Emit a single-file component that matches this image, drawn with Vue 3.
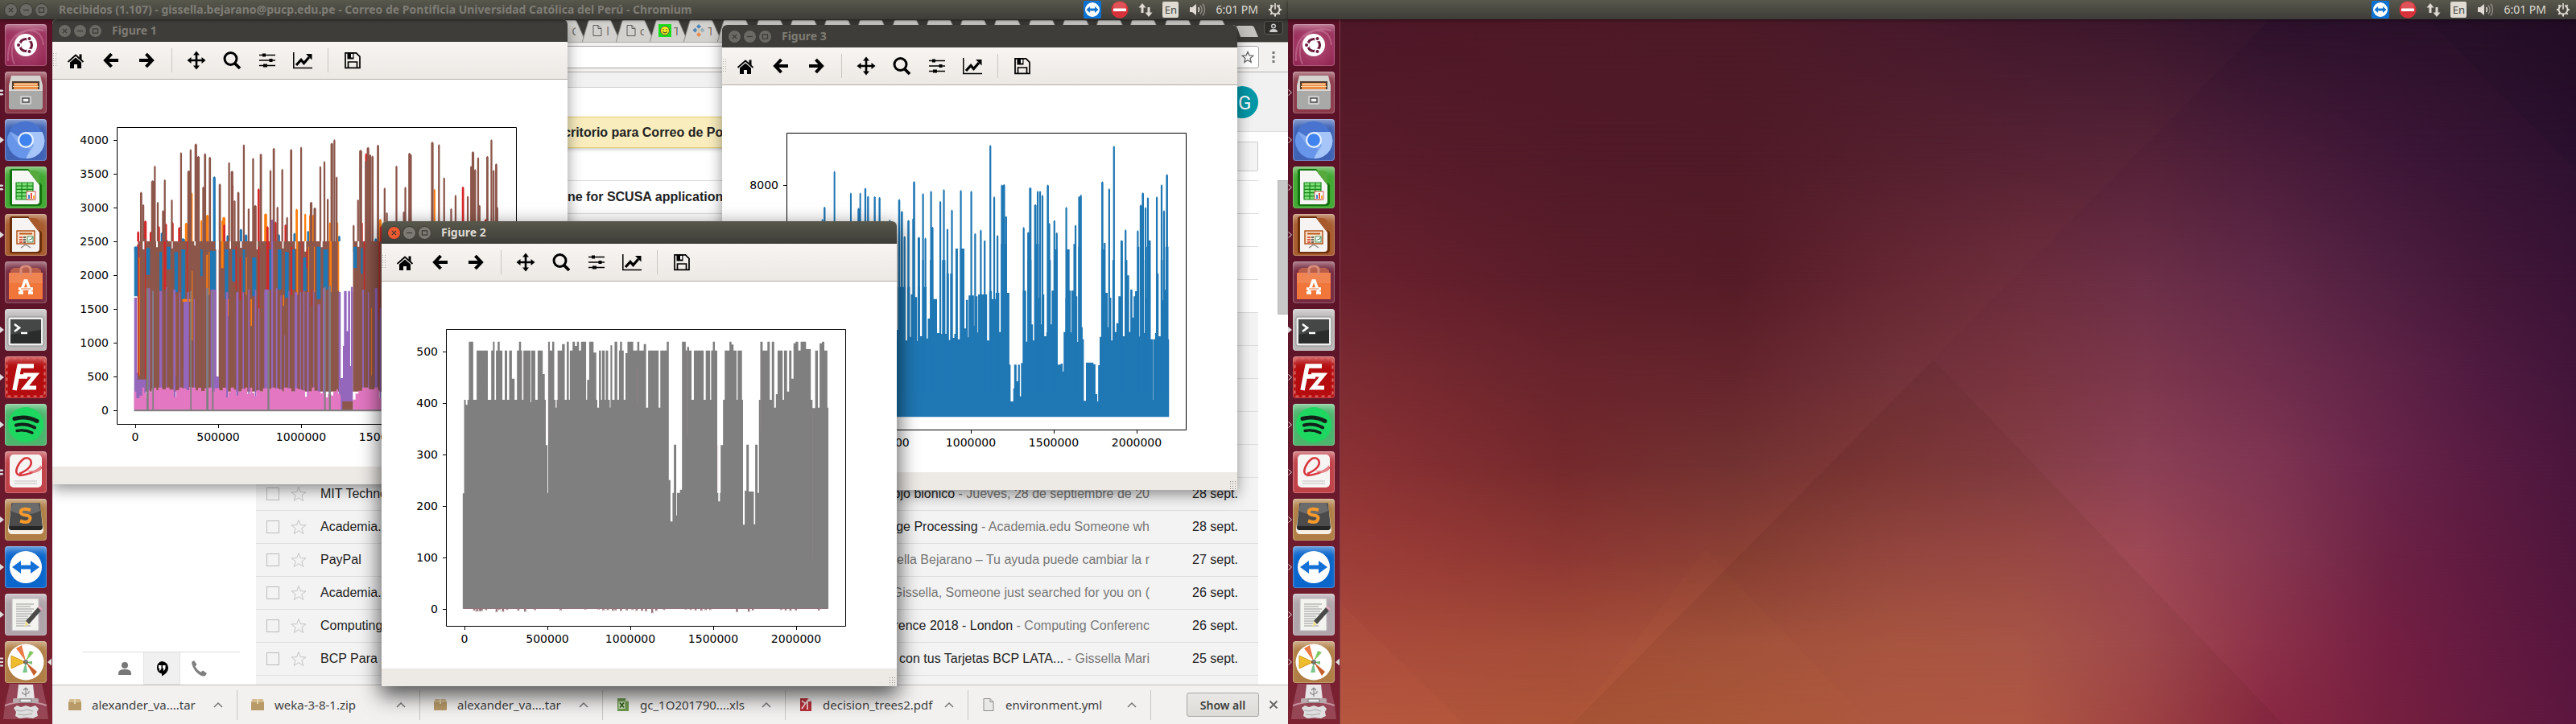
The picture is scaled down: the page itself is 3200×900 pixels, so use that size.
<script setup>
const monitors = [{ id: 'left', title: 'Recibidos (1.107) - gissella.bejarano@pucp.edu.pe - Correo de Pontificia Universidad Católica del Perú - Chromium' }, { id: 'right', title: '' }]

const launcher = [
  { name: 'dash', bg: 'plum', pip: '' },
  { name: 'files', bg: 'rose', pip: 'two' },
  { name: 'chromium', bg: 'blue', pip: 'one' },
  { name: 'calc', bg: 'green', pip: 'two' },
  { name: 'impress', bg: 'rust', pip: 'one' },
  { name: 'software', bg: 'wine', pip: '' },
  { name: 'terminal', bg: 'silver', pip: 'one' },
  { name: 'filezilla', bg: 'red', pip: 'one' },
  { name: 'spotify', bg: 'mint', pip: 'one' },
  { name: 'pdf', bg: 'coral', pip: 'two' },
  { name: 'sublime', bg: 'tan', pip: 'one' },
  { name: 'teamviewer', bg: 'azure', pip: 'one' },
  { name: 'gedit', bg: 'grey', pip: 'one' },
  { name: 'python', bg: 'tan', pip: 'three' }
]

const tabs = Array.from({ length: 34 }, (_, i) => {
  const known = { 14: ['', 'C'], 15: ['file', 'l'], 16: ['file', 'c'], 17: ['smile', 'T'], 18: ['grid', 'T'] }
  const [icon, text] = known[i] || ['', '']
  return { id: i, icon, text }
})

const mails = [
  { from: '', lead: 'ne for SCUSA application', rest: '', date: '', unread: true },
  { from: '', lead: '', rest: '', date: '', unread: true },
  { from: '', lead: '', rest: '', date: '', unread: true },
  { from: '', lead: '', rest: '', date: '', unread: true },
  { from: '', lead: '', rest: '', date: '' },
  { from: '', lead: '', rest: '', date: '' },
  { from: '', lead: '', rest: '', date: '' },
  { from: '', lead: '', rest: '', date: '' },
  { from: '', lead: '', rest: '', date: '' },
  { from: '', lead: '', rest: '', date: '' },
  { from: 'MIT Technology', lead: 'ojo biónico', rest: ' - Jueves, 28 de septiembre de 20', date: '28 sept.' },
  { from: 'Academia.edu', lead: 'Image Processing', rest: ' - Academia.edu Someone wh', date: '28 sept.' },
  { from: 'PayPal', lead: '', rest: 'Gissella Bejarano – Tu ayuda puede cambiar la r', date: '27 sept.' },
  { from: 'Academia.edu', lead: '', rest: 'Gissella, Someone just searched for you on (', date: '26 sept.' },
  { from: 'Computing', lead: 'Conference 2018 - London', rest: ' - Computing Conferenc', date: '26 sept.' },
  { from: 'BCP Para', lead: 'con tus Tarjetas BCP LATA...', rest: ' - Gissella Mari', date: '25 sept.' },
  { from: '', lead: '', rest: '', date: '' }
].slice(0).filter((m, i) => i !== 9).map((m, i) => ({ ...m, id: i }))

const downloads = [
  { name: 'alexander_va....tar', kind: 'box' },
  { name: 'weka-3-8-1.zip', kind: 'box' },
  { name: 'alexander_va....tar', kind: 'box' },
  { name: 'gc_1O201790....xls', kind: 'xls' },
  { name: 'decision_trees2.pdf', kind: 'pdf' },
  { name: 'environment.yml', kind: 'page' }
].map((d, i) => ({ ...d, id: i }))

const tools = ['home', 'back', 'forward', 'sep', 'pan', 'zoom', 'sliders', 'chart', 'sep', 'save']

const xt = [[103, '0'], [206, '500000'], [309, '1000000'], [412, '1500000'], [515, '2000000']]
const figures = [
  { n: 1, xt, yt: [0, 500, 1000, 1500, 2000, 2500, 3000, 3500, 4000].map(v => [411 - v * 42 / 500, v]) },
  { n: 3, xt, yt: [0, 2000, 4000, 6000, 8000].map(v => [412 - v * 36 / 1000, v]) },
  { n: 2, xt, yt: [0, 100, 200, 300, 400, 500].map(v => [407 - v * 64 / 100, v]) }
]

/* Outline of a filled step trace: flat run tuples "x,top" down to a floor. */
function steps(text, floor) {
  const pts = text.trim().split(/\s+/).map(p => p.split(',').map(Number))
  let d = `M${pts[0][0]} ${floor}`
  for (const [x, y] of pts) d += `H${x}V${y}`
  return d + `V${floor}Z`
}
/* Vertical spikes "x,top[,width]" down to a floor. */
function spikes(text, floor, width) {
  return text.trim().split(/\s+/).map(p => {
    const [x, y, w = width] = p.split(',').map(Number)
    return `M${x - w / 2} ${floor}V${y + 3}L${x} ${y - 2}L${x + w / 2} ${y + 3}V${floor}Z`
  }).join('')
}
/* Bars "x,width,top,bottom". */
function bars(text, floor) {
  return text.trim().split(/\s+/).map(p => {
    const [x, w, t, b = floor] = p.split(',').map(Number)
    return `M${x} ${t}h${w}V${b}h${-w}Z`
  }).join('')
}

const greyTrace = steps(`249,1060 253,711 258,730 263,711 267,494 280,711 290,527 323,711 333,527 338,494 343,711 347,527 352,494 358,527 366,711 373,527 380,711 386,527 394,632 402,711 409,527 415,494 421,527 424,711 428,527 449,720 451,527 463,711 470,527 485,615 491,711 494,880 499,1058 501,494 506,527 513,494 519,711 523,740 526,711 529,527 542,503 550,711 556,494 562,711 565,527 573,494 580,510 586,494 592,527 598,494 613,711 616,637 622,494 635,535 643,711 646,740 651,527 657,711 660,527 668,711 671,527 678,711 683,740 685,508 690,711 697,494 705,711 710,527 713,494 719,527 724,711 729,537 735,494 752,527 764,494 770,527 783,503 790,740 796,527 827,740 832,527 851,494 857,1010 862,1165 868,1058 872,878 879,1142 881,1058 890,1046 896,494 907,527 911,514 917,527 924,711 931,527 960,711 966,527 979,711 982,527 987,494 993,527 1000,1058 1003,1090 1008,1058 1010,880 1017,711 1022,527 1036,494 1042,505 1048,527 1057,711 1060,527 1073,711 1076,1177 1081,1050 1086,878 1093,1053 1108,1175 1112,878 1119,1058 1123,711 1127,494 1134,527 1148,494 1155,711 1161,494 1168,740 1173,690 1178,527 1193,711 1197,527 1206,680 1212,527 1219,632 1225,500 1231,494 1239,527 1246,494 1262,522 1276,711 1281,742 1289,527 1297,740 1302,500 1309,494 1316,527 1325,740 1328,740`, 1490)
const greyNoise = spikes('283,1497 291,1500 299,1499 305,1498 318,1495 349,1502 357,1494 368,1501 380,1494 413,1497 433,1501,6 462,1495 538,1496 611,1493 650,1493 664,1496 677,1495 692,1497 700,1496 716,1498 733,1496 750,1494 762,1497 778,1498 790,1499 808,1506,6 820,1498 843,1494 907,1493 922,1494 936,1496 953,1497 966,1495 979,1494 1058,1502 1093,1501 1105,1496 1189,1494 1202,1496 1216,1497 1232,1496 1300,1496', 1488, 6)

const blueSteps = steps(`-290,400 38,360 42,200 67,400 73,200 82,386 85,228 97,238 106,402 108,200 116,384 123,100 129,200 138,392 142,318 149,100 160,245 173,372 182,375 190,100 201,375 205,150 213,398 217,150 225,390 231,375 235,57 243,395 250,57 265,355 270,248 277,388 279,232 297,345 300,235 309,370 311,228 341,400 348,215 357,245 370,222 382,368 387,40 408,222 416,490 420,627 429,578 432,490 440,552 445,490 451,608 455,484 461,214 472,404 477,100 490,340 495,400 500,40 515,240 522,340 525,228 533,384 540,370 544,100 555,340 558,214 565,60 578,490 588,486 595,515 598,368 604,240 606,60 618,214 622,370 624,214 631,40 638,235 644,405 647,50 657,350 662,395 666,625 673,482 698,488 705,600 711,627 714,492 719,386 724,60 733,36 739,222 746,350 753,240 758,400 762,100 768,368 775,335 782,235 790,28 797,384 803,100 812,157 818,368 822,210 829,314 833,235 838,216 845,50 852,385 854,100 868,372 871,50 878,240 882,28 890,395 899,622 900,395 905,372 909,150 917,384 924,100 931,250 934,210 940,50 950,395 952,395`, 685)
const blueSpikes = spikes('46,-126,7 55,-82,7 64,12 77,-48,7 93,-55 96,-193,7 112,15,8 126,-148 134,18 153,-157 158,-23 184,-119 196,-163 208,-16 223,-87 253,-160 288,-157 301,1 320,-12 333,27 352,-328 365,-136 376,8 391,-180,7 398,-182,7 405,-63 464,-22 479,-4 486,-170,8 503,-107,8 511,-157 519,-157 527,-142 545,-180,7 550,-37 567,-48 575,-2 607,-97 638,-30 650,-137 656,-143 728,-192,7 751,-166 767,-325 792,27 806,-13 847,-10 857,-105,7 864,-151,7 873,-96 881,-133 887,27 911,-136 927,-181 935,-84 945,-219,7', 600, 6)
const blueSpikesLeft = spikes('995,818 1003,772,7 1040,639 1101,720 1130,777,8 1136,720 1155,702,7 1165,732,7 1190,733,7 1208,736,7 1246,820', 1500, 6)

const brownTop = spikes('382,717,6 388,763 413,674,8 419,619 427,754 446,670 441,785 465,745 490,569 511,637,8 516,557 530,537,7 537,583,7 550,697 555,573,6 568,586,6 595,686,6 620,606 628,638,7 635,748 645,716,6 660,540 673,778 685,590 691,766,7 706,574,6 732,635 741,553,6 751,772 764,631 777,810 788,557,6 815,549 842,754,7 852,775,7 867,621 878,602 887,742 898,534,7 905,521 911,660 957,840 969,745 976,560,8 990,600 996,550,7 1002,577 1008,582,6 1023,541,6 1041,701 1047,793 1073,619 1097,698 1093,790 1108,571,6 1112,576 1170,530,7 1188,539 1202,663 1221,778 1233,728 1266,732 1275,620 1280,566,7 1286,632 1294,588 1298,766 1319,583,6 1330,521 1336,635 1343,611,6 1346,773', 940, 5)
const redTop = spikes('374,864,6 393,824,8 408,865 430,845 449,835 467,830 486,848,8 607,838 629,690 700,704 724,845 746,828 773,838 979,830 991,573 1031,845 1253,697 1314,818', 940, 6)
const orangeTop = spikes('504,832,7 519,720 545,822 561,802,7 602,822 606,810,8 719,797,8 803,780,6 826,798 840,802,7 848,802,8 893,830 913,830 1029,818,7 1176,706', 940, 5)
const blueTop = spikes('368,920,9 400,920 452,897,8 438,868 460,912,8 475,912 495,890,12 532,912 574,912 580,659,7 616,878 652,855,7 666,875,7 680,906,9 712,912,9 755,875 797,870,6 834,862,6 918,880 962,910,9 1017,890,7', 940, 6)

const brownBase = bars('512,756,30 512,290,0 536,8,-10 816,446,0 1315,110,0', 560)
const whiteGaps = bars('510,4,0,12 532,6,0,30 582,6,0,22 640,4,0,26 724,5,0,16 806,9,0,505 856,5,0,28 895,6,0,24 956,4,0,30 1052,5,0,26 1100,4,0,28 1135,6,0,38 1196,6,0,22 1264,51,0,190 1271,7,190,510 1278,4,190,390 1292,5,190,335 1305,3,190,465 1333,6,0,20', 0)
const bluePatches = bars('500,13,20,205 545,14,25,125 594,9,40,185 622,13,20,105 650,13,40,190 676,14,30,215 747,8,30,130 783,22,35,180 838,13,30,215 865,12,30,150 905,8,30,190 940,15,60,205 1003,9,30,180 1035,14,30,180 1062,14,40,210 1090,9,30,180 1130,12,60,185 1180,15,20,215 1205,17,30,180 1317,13,20,100 1345,7,25,120', 0)
const orangeStripes = bars('518,3,60,500 652,3,200,500 680,38,215,225 715,3,110,370 769,5,50,200 778,3,40,200 824,9,0,100 848,4,215,280 917,3,60,200 934,5,215,315 1055,4,200,240 1105,6,0,200 1102,4,200,500 1149,3,20,190 1170,3,20,190 1228,8,0,190 1259,6,0,185 1384,2,250,500', 0)
const redStripes = bars('513,4,0,500 540,3,0,510 610,9,0,180 696,4,0,190 878,4,20,180 893,5,60,220 963,4,20,280 993,10,0,180 1083,6,20,200 1124,3,0,190 1142,4,30,100 1160,3,180,240 1356,4,0,180 1411,4,0,290', 0)
const purpleStripes = bars('500,10,210 500,44,515 510,3,490 547,12,175 567,6,185 594,10,185 619,3,170 646,8,180 668,4,190 684,14,225 698,6,190 722,4,215 769,8,175 785,21,180 806,10,505 842,8,190 880,9,190 904,5,190 925,5,180 950,5,180 963,4,250 985,18,180 1011,7,0 1028,6,175 1045,4,200 1060,3,350 1075,4,185 1098,10,190 1118,4,190 1130,5,185 1144,7,190 1168,3,185 1184,9,235 1203,10,175 1225,5,170 1262,8,190 1270,8,510 1278,4,390 1282,10,185 1292,5,335 1297,8,185 1305,3,465 1308,7,170 1350,6,180 1371,4,190 1397,10,175 1415,5,250', 631)
const pinkTrace = steps('500,560 508,585 520,575 530,545 538,565 545,585 550,555 558,562 565,550 575,545 583,555 590,545 605,552 618,545 632,553 647,580 656,555 668,545 680,548 695,555 705,543 716,545 730,556 738,546 750,558 762,548 775,545 790,560 800,548 818,556 830,546 843,582 850,562 860,545 872,553 880,575 888,560 900,550 915,545 922,570 932,545 940,565 948,578 955,556 970,560 980,548 1002,550 1012,545 1025,548 1040,552 1052,560 1058,545 1072,548 1086,560 1100,548 1112,552 1124,556 1137,580 1146,560 1162,545 1172,557 1185,560 1195,566 1206,560 1214,582 1222,570 1235,575 1242,560 1254,552 1260,570 1268,575 1270,631 1315,590 1325,568 1336,557 1350,545 1375,552 1395,545 1410,556 1414,585 1420,585', 631)
const greyLines = bars('546,8,175 568,5,185 709,5,185 769,8,175 790,6,185 997,7,185 1208,6,170 1226,7,165 500,920,628', 634)

/* Wallpaper colour mesh: one horizontal gradient per row, cross-faded downwards. */
const meshX = [0, 18, 32, 45, 55, 65, 75, 85, 92, 100]
const meshY = [0, 20, 37, 50, 63, 76, 89, 100]
const mesh = [
  '4b1526 4c1726 4a1826 44172a 3e162a 38152b 2c112b 2a102a 281028 230d24',
  '571a29 4f1827 4d1826 521e2d 542033 552238 4b1d3a 3e1737 361433 2e1130',
  '681f2d 571b28 521a26 632532 6c2c3c 6c2f47 612948 4f1f40 441838 3a1336',
  '7a2930 66222b 61222b 70303a 78343f 7c374c 702e4c 5e2346 501b40 42153a',
  '8a3034 72272b 703030 7f3838 843d43 8b4055 7f3552 68244a 5a1c42 4b163c',
  '9b3c38 8b3632 8a4034 9a4a42 9f4c48 9e4855 873750 6c2244 601b40 50163c',
  'aa4a3c a44c38 a8543e b05a44 b05a4b a44c50 8c3149 741f42 651b40 58163e',
  'b2543e ac5438 b05a3c b65c44 b85c48 a54648 8a2843 75203f 681b3f 5c173f'
].map((row, i) => {
  const stops = row.split(' ').map((c, k) => `#${c} ${meshX[k]}%`).join(', ')
  const mask = i ? `linear-gradient(to bottom, transparent ${meshY[i - 1]}%, #000 ${meshY[i]}%)` : 'none'
  return { background: `linear-gradient(to right, ${stops})`, maskImage: mask }
})
</script>

<template>
  <main class="desk">
    <section v-for="m in monitors" :key="m.id" class="monitor">
      <header class="panel">
        <div v-if="m.title" class="wbtns">
          <button v-for="b in ['x', 'm', 'r']" :key="b" class="wbtn" :aria-label="b">
            <svg viewBox="0 0 17 17"><path v-if="b === 'x'" d="M5.500 5.500l6 6M11.500 5.500l-6 6" /><path v-else-if="b === 'm'" d="M4.500 8.500h8" /><rect v-else x="5" y="5.500" width="7" height="6" /></svg>
          </button>
        </div>
        <h1 class="ptitle">{{ m.title }}</h1>
        <div class="tray">
          <svg class="ic22" viewBox="0 0 22 22"><rect width="22" height="22" rx="2" fill="#0c72d4" /><circle cx="11" cy="11" r="9" fill="#fff" /><path d="M3.500 11l4.500-4v2.500h6v-2.500l4.500 4-4.500 4v-2.500h-6v2.500z" fill="#1272cf" /></svg>
          <svg class="ic22" viewBox="0 0 22 22"><circle cx="11" cy="11" r="10.500" fill="#d8333a" /><ellipse cx="11" cy="6.500" rx="8" ry="5.500" fill="#e4686a" opacity=".6" /><rect x="3" y="9.500" width="16" height="3.500" fill="#fff" /></svg>
          <svg class="ic18" viewBox="0 0 18 18"><path d="M5 1L0.500 6.500h3V13h3V6.500h3zM13 18l4.500-5.500h-3V6h-3v6.500h-3z" fill="#dfdbd2" /></svg>
          <span class="lang">En</span>
          <svg class="ic22" viewBox="0 0 22 22"><path d="M2 8h3l5-4v14l-5-4H2z" fill="#dfdbd2" /><path d="M12.500 8q2 3 0 6" fill="none" stroke="#dfdbd2" stroke-width="1.500" /><path d="M15 5.500q4 5.500 0 11M18 3.500q5 7.500 0 15" fill="none" stroke="#8d8a82" stroke-width="1.500" /></svg>
          <time class="clock">6:01 PM</time>
          <svg class="ic18" viewBox="0 0 18 18"><circle cx="9" cy="9" r="5.500" fill="none" stroke="#dfdbd2" stroke-width="2" /><path d="M9 1v3M9 15v2.500M1 9h3M14 9h3M3.300 3.300l2 2M12.700 12.700l2 2M3.300 14.700l2-2M12.700 5.300l2-2" stroke="#dfdbd2" stroke-width="2" /><path d="M9 1v8" stroke="#47463f" stroke-width="4" /><path d="M9 1v7.500" stroke="#dfdbd2" stroke-width="1.700" /></svg>
        </div>
      </header>

      <div class="work">
        <nav class="launcher" :class="m.id">
          <button v-for="a in launcher" :key="a.name" class="tile" :class="a.bg" :aria-label="a.name">
            <svg class="pip" viewBox="0 0 6 12">
              <template v-if="m.id === 'left'">
                <path v-if="a.pip === 'one'" d="M0 2l5 4-5 4z" fill="#ddd" />
                <path v-if="a.pip === 'two'" d="M0 2.500h3l1.500 1.200-1.500 1.200h-3zM0 7h3l1.500 1.200-1.500 1.200h-3z" fill="#ddd" />
                <path v-if="a.pip === 'three'" d="M0 0.500h4v2h-4zM0 5h4v2h-4zM0 9.500h4v2h-4z" fill="#ddd" />
              </template>
              <path v-else-if="a.name === 'terminal'" d="M0 2l5 4-5 4z" fill="#ddd" />
              <path v-else-if="a.pip" d="M0.500 2.500l4 3.500-4 3.500" fill="none" stroke="#ddd" />
            </svg>
            <svg v-if="a.name === 'python'" class="pipr" viewBox="0 0 6 12"><path d="M6 1.500L1 6l5 4.500z" fill="#ddd" /></svg>
            <svg class="app" viewBox="0 0 52 52">
              <g v-if="a.name === 'dash'">
                <path d="M4 46Q2 14 26 8Q46 6 48 26M12 50Q2 26 22 10M48 8Q30 2 14 16" fill="none" stroke="#d890ac" stroke-width="2" opacity=".45" />
                <circle cx="26" cy="26" r="14" fill="#fff" /><circle cx="26" cy="26" r="7.500" fill="none" stroke="#6d1b3c" stroke-width="3.200" />
                <g stroke="#fff" stroke-width="1.500"><circle cx="17" cy="26" r="2.800" fill="#6d1b3c" /><circle cx="30.500" cy="18" r="2.800" fill="#6d1b3c" /><circle cx="30.500" cy="34" r="2.800" fill="#6d1b3c" /></g>
              </g>
              <g v-else-if="a.name === 'files'">
                <path d="M8 5h36l3 12v26a4 4 0 0 1-4 4H9a4 4 0 0 1-4-4V17z" fill="#d4d3d0" /><rect x="9" y="12" width="34" height="12" fill="#4f3c32" /><path d="M11 14h30v9H11z" fill="#e98a45" /><path d="M10 18h32v1H10zM12 15h28v1.500H12z" fill="#f8d7a8" />
                <path d="M5 22h42v21a4 4 0 0 1-4 4H9a4 4 0 0 1-4-4z" fill="#a9a9a8" /><path d="M5 22h42v2H5z" fill="#d7d6d4" /><rect x="19" y="30" width="14" height="11" rx="2" fill="#cfcfcf" /><rect x="22" y="33" width="8" height="5" fill="#f4f4f4" stroke="#4d4d4d" stroke-width="1.500" />
              </g>
              <g v-else-if="a.name === 'chromium'">
                <circle cx="26" cy="27" r="22" fill="#7fa8ee" /><path d="M26 27L6 15A22 22 0 0 1 46 16z" fill="#4874cf" /><path d="M26 16h20.500A22 22 0 0 1 26 49l10-16z" fill="#a6c6fa" /><path d="M6 16A22 22 0 0 0 26 49l5-12-13-4z" fill="#6695ea" /><circle cx="26" cy="26" r="10" fill="#eaf2fe" /><circle cx="26" cy="26" r="7.800" fill="#3f83ee" />
              </g>
              <g v-else-if="a.name === 'calc'">
                <path d="M6 6q0-3 3-3h20l17 20v21q0 5-5 5H9q-3 0-3-3z" fill="#14710f" /><path d="M9 5h20l14 18v20q0 4-4 4H9z" fill="#f6f6f4" /><path d="M29 5l14 18V12q0-7-7-7z" fill="#57a93c" />
                <path d="M14 20h21v21H14z" fill="#7fe07a" /><path d="M14 20h21v21H14zM14 24.200h21M14 28.400h21M14 32.600h21M14 36.800h21M21 20v21M28 20v21" fill="none" stroke="#17851a" stroke-width="1.200" /><rect x="27" y="31" width="11" height="10" fill="#fff" stroke="#c55" /><path d="M29 40v-5h2v5z" fill="#3a86c8" /><path d="M32 40v-7h2v7z" fill="#e3533a" /><path d="M35 40v-4h2v4z" fill="#f3b63c" />
              </g>
              <g v-else-if="a.name === 'impress'">
                <path d="M6 6q0-3 3-3h20l17 20v21q0 5-5 5H9q-3 0-3-3z" fill="#6a2e0b" /><path d="M9 5h20l14 18v20q0 4-4 4H9z" fill="#f6f4f2" /><path d="M29 5l14 18V12q0-7-7-7z" fill="#a95a2c" />
                <rect x="15" y="21" width="22" height="16" fill="#fbe3cb" stroke="#b4561f" stroke-width="1.500" /><path d="M18 24.500h16" stroke="#b4561f" stroke-width="2" /><path d="M18 29h4M18 32h4M18 35h4" stroke="#d2362a" stroke-width="1.300" /><path d="M23 29h3M23 32h3M23 35h3" stroke="#333" stroke-width="1.500" /><rect x="28" y="28" width="7" height="7" fill="#fff" stroke="#3c8f5e" /><path d="M29.500 33l2-2 1 1 2-3" fill="none" stroke="#2b7a4a" /><path d="M26 38l-6 4M26 38l6 4" stroke="#888" stroke-width="1.500" />
              </g>
              <g v-else-if="a.name === 'software'">
                <path d="M7 11l4-3h30l4 3v4H7z" fill="#c9694d" opacity=".8" /><path d="M5 14h42v33H5z" fill="#f0763a" /><path d="M5 14h42v13H5z" fill="#f18551" /><path d="M20 17v-7q0-4 6-4t6 4v7" fill="none" stroke="#d98b77" stroke-width="3" /><path d="M20 38l5-14h2l5 14" fill="none" stroke="#fff" stroke-width="3.500" /><path d="M17 34h18M17 39h6M29 39h6" stroke="#fff" stroke-width="3.500" /><path d="M20 34h12" stroke="#f0763a" stroke-width="1" />
              </g>
              <g v-else-if="a.name === 'terminal'">
                <rect x="4" y="10" width="44" height="36" rx="2" fill="#eee" stroke="#8d8d8d" /><rect x="7" y="13" width="38" height="30" fill="#2b2d2c" /><path d="M7 13h38v13L7 32z" fill="#454746" /><path d="M12 19l6 4.500-6 4.500" fill="none" stroke="#fff" stroke-width="2.600" /><path d="M20 30h8" stroke="#fff" stroke-width="2.400" />
              </g>
              <g v-else-if="a.name === 'filezilla'">
                <rect x="2.500" y="2.500" width="47" height="47" fill="none" stroke="#dc6a66" stroke-width="2" stroke-dasharray="4 4" /><path d="M12 42L18 12h18M15 25h13" fill="none" stroke="#fff" stroke-width="5.500" /><path d="M23 23h15L25 39h14" fill="none" stroke="#fff" stroke-width="5" />
              </g>
              <g v-else-if="a.name === 'spotify'">
                <circle cx="26" cy="26" r="22" fill="#1ed760" /><g fill="none" stroke="#12201a" stroke-linecap="round"><path d="M12 18.500q15-4 28 3" stroke-width="5" /><path d="M14 26.500q12-3 23 3" stroke-width="4.200" /><path d="M15 33.500q10-2 19 2.500" stroke-width="3.400" /></g>
              </g>
              <g v-else-if="a.name === 'pdf'">
                <rect x="6" y="4" width="40" height="41" rx="5" fill="#f7f5f4" /><path d="M18 28Q36 20 32 11Q26 4 18 15Q10 28 19 30Q32 29 46 20" fill="none" stroke="#d8383e" stroke-width="2.600" /><path d="M28 24Q38 26 45 17v6Q36 30 28 24z" fill="#e58488" /><path d="M12 37h28M12 40h28" stroke="#c3c0be" />
              </g>
              <g v-else-if="a.name === 'sublime'">
                <path d="M8 8L4 38q0 6 5 6h34q5 0 5-6L44 8z" fill="#f5efe4" /><path d="M10 5h32q2 0 2 2l3 28q0 4-4 4H9q-4 0-4-4L8 7q0-2 2-2z" fill="#4b4b4b" /><path d="M10 5h32l2 10Q26 24 7 15z" fill="#6b6b6b" /><path d="M5.500 34h41v2q0 3-4 3H9q-4 0-4-3z" fill="#252525" /><path d="M32 14q-11-3-12 1.500t6 5 5 5.500-12 1.500" fill="none" stroke="#f79a2b" stroke-width="4" />
              </g>
              <g v-else-if="a.name === 'teamviewer'">
                <circle cx="26" cy="26" r="20" fill="#fff" /><path d="M9 26l11-8v5.500h12V18l11 8-11 8v-5.500H20V34z" fill="#1470d6" />
              </g>
              <g v-else-if="a.name === 'gedit'">
                <rect x="9" y="6" width="33" height="40" fill="#f3f3f0" stroke="#bbb" /><path d="M14 13h22M14 16h18M14 19h22M14 22h20M14 25h22M14 28h15M14 31h20M14 34h16M14 37h12M14 40h18" stroke="#9a9a98" /><path d="M26 34L41 17l4 4-15 17z" fill="#4a4b48" /><path d="M41 17l2-2 4 4-2 2z" fill="#dba4b8" /><path d="M26 34l4 4-6 3z" fill="#f3e39a" />
              </g>
              <g v-else>
                <circle cx="26" cy="26" r="22.500" fill="#fff" /><path d="M26 25L14 9l7-4z" fill="#eb7a45" /><path d="M26 25l5-13 5 2z" fill="#83c763" /><path d="M25 26L8 18v16z" fill="#eebb2c" stroke="#d19a1c" /><path d="M26 26l8-1 0 4z" fill="#77bb77" /><path d="M26 26l14 12-4 5z" fill="#c95f2c" /><path d="M26 26l2 13h-6z" fill="#7cc58f" /><circle cx="26" cy="26" r="3" fill="#333" opacity=".6" />
              </g>
            </svg>
          </button>
          <button class="trash" aria-label="trash">
            <svg viewBox="0 0 56 46"><path d="M8 0h40l6 27q-26-7-52 0zM2 27q26-7 52 0l2 17H0z" fill="#c88a9a" opacity=".35" /><path d="M2 27q26-9 52 0" fill="none" stroke="#e4c5cd" stroke-width="2" opacity=".6" /><path d="M19 1h18l2 18H17z" fill="#e8e6e6" /><path d="M28 5v11M25 8l3-3 3 3M24 10v2l4 2M32 9v2l-4 2" fill="none" stroke="#8a8888" stroke-width="1.200" /><rect x="12" y="18" width="32" height="6" rx="2" fill="#b9a9ad" /><path d="M21 19h14v4H21z" fill="#eee" stroke="#777" /><path d="M13 30l4-3 5 2 6-2 6 2 6-2 4 4-2 4 1 5-6 3-8-1-9 1-5-3 1-5z" fill="#dedede" /><path d="M16 33l7 1 6-2 8 2M18 38l8 1 10-2" fill="none" stroke="#a9a5a6" /></svg>
          </button>
        </nav>

        <div v-if="m.id === 'left'" class="session">
          <article class="browser">
            <div class="tabstrip">
              <button v-for="t in tabs" :key="t.id" class="tab">
                <svg class="tabbg" viewBox="0 0 48 28"><path d="M0 28L8 1q.5-1 2-1h24q1.500 0 2 1l12 27z" fill="#d3d1ce" stroke="#8c8a87" /></svg>
                <svg class="tabic" viewBox="0 0 16 16">
                  <path v-if="t.icon === 'file'" d="M3 1.500h6l4 4v9H3zM9 1.500v4h4" fill="none" stroke="#5a5a5a" />
                  <g v-else-if="t.icon === 'smile'"><rect width="16" height="16" fill="#18e01a" /><circle cx="8" cy="8" r="5.500" fill="#f8ee20" stroke="#554" /><path d="M6 6v1.500M10 6v1.500M5 9.500q3 3 6 0" stroke="#222" fill="none" /></g>
                  <g v-else-if="t.icon === 'grid'"><path d="M8 0l3 3-3 3-3-3zM3.500 4.500l3 3-3 3-3-3z" fill="#4a86b8" /><path d="M12.500 4.500l3 3-3 3-3-3z" fill="#9ab0b8" /><path d="M8 5l3 3-3 3-3-3z" fill="#d5c8b0" /><path d="M8 10l3 3-3 3-3-3z" fill="#e88a4a" /></g>
                </svg>
                <span class="tabtx">{{ t.text }}</span>
              </button>
              <div class="stripend">
                <svg class="newtab" viewBox="0 0 28 15"><path d="M0 0h19q2 0 3 2l5 12H5z" fill="#c4c2bf" /></svg>
                <button class="user" aria-label="profile"><svg viewBox="0 0 12 12"><circle cx="6" cy="3.500" r="2.300" fill="none" stroke="#ccc" stroke-width="1.400" /><path d="M1 11q0-4 5-4t5 4z" fill="#ccc" /></svg></button>
              </div>
            </div>
            <div class="addr">
              <input class="url" type="text" aria-label="address">
              <svg class="fav" viewBox="0 0 16 16"><path d="M8 1.500l2 4.500 4.700.4-3.600 3.200 1.100 4.700L8 11.800l-4.200 2.500 1.100-4.700L1.300 6.400 6 6z" fill="none" stroke="#666" stroke-width="1.300" /></svg>
              <svg class="dots" viewBox="0 0 4 16"><path d="M.5 1h3v3h-3zM.5 6.500h3v3h-3zM.5 12h3v3h-3z" fill="#777" /></svg>
            </div>
            <div class="ghead">
              <div class="gtop"></div>
              <span class="avatar">G</span>
            </div>
            <p class="notice">critorio para Correo de Pontificia</p>
            <div class="gbar"><button class="gset" aria-label="settings"></button></div>
            <div class="gbody">
              <aside class="side">
                <div class="chat">
                  <button aria-label="contacts"><svg viewBox="0 0 20 20"><circle cx="10" cy="6" r="4" fill="#777" /><path d="M2 18v-2q0-5 8-5t8 5v2z" fill="#777" /></svg></button>
                  <button class="on" aria-label="hangouts"><svg viewBox="0 0 20 20"><path d="M10 1a8 8 0 0 1 8 8.500q0 6-8 10v-3a8 8 0 0 1 0-15.500z" fill="#000" /><path d="M6 6h3.500v4L8 12.500H6.500L7.500 10H6zM11 6h3.500v4L13 12.500h-1.500l1-2.500H11z" fill="#fff" /></svg></button>
                  <button aria-label="calls"><svg viewBox="0 0 20 20"><path d="M1 2l3-2 3.500 5L5.500 7.500Q8 12 12.500 14.500L15 12.500l5 3.500-2 3Q14 21 8 15.500T1 2z" fill="#808080" /></svg></button>
                </div>
              </aside>
              <ul class="mails">
                <li v-for="r in mails" :key="r.id" class="mail" :class="{ unread: r.unread }">
                  <input type="checkbox" class="chk" :aria-label="'select ' + r.id">
                  <svg class="star" viewBox="0 0 20 20"><path d="M10 1.500l2.400 6.200 6.600.2-5.200 4 1.900 6.600L10 14.700l-5.700 3.800 1.900-6.600-5.200-4 6.600-.2z" fill="none" stroke="#c4c4c4" /></svg>
                  <span class="from">{{ r.from }}</span>
                  <span class="subj"><span class="line"><span class="lead">{{ r.lead }}</span>{{ r.rest }}</span></span>
                  <span class="date">{{ r.date }}</span>
                </li>
              </ul>
              <div class="scroll"><div class="thumb"></div></div>
            </div>
            <footer class="shelf">
              <div v-for="d in downloads" :key="d.id" class="dl">
                <svg class="dlic" viewBox="0 0 16 16">
                  <g v-if="d.kind === 'box'"><path d="M2 1h12l2 4v10H0V5z" fill="#b89a68" /><path d="M2 1h12l2 4H0z" fill="#d3bb8d" /><path d="M7 1h2v6H7z" fill="#e6d6b0" /></g>
                  <g v-else-if="d.kind === 'xls'"><path d="M1 0h10l4 4v12H1z" fill="#6e9a4c" /><path d="M11 0v4h4z" fill="#d8e6c8" /><path d="M2.500 4h8v9h-8z" fill="#cfe0bb" /><path d="M4 5.500l5 6M9 5.500l-5 6" stroke="#2d5f1c" stroke-width="1.700" /></g>
                  <g v-else-if="d.kind === 'pdf'"><path d="M1 0h10l4 4v12H1z" fill="#b8303a" /><path d="M11 0v4h4z" fill="#eee" /><path d="M3 13L10 3v11M3 3l5 4" fill="none" stroke="#f3d6d6" stroke-width="1.800" /></g>
                  <path v-else d="M2 .5h8l4 4v11H2zM10 .5v4h4" fill="#e8e8e6" stroke="#8f8f8d" />
                </svg>
                <a href="#" class="dlname">{{ d.name }}</a>
                <svg class="caret" viewBox="0 0 12 8"><path d="M1 7l5-5 5 5" fill="none" stroke="#777" stroke-width="1.500" /></svg>
              </div>
              <span class="grow"></span>
              <button class="showall">Show all</button>
              <button class="shut" aria-label="close"><svg viewBox="0 0 12 12"><path d="M1.500 1.500l9 9M10.500 1.500l-9 9" stroke="#666" stroke-width="1.800" /></svg></button>
            </footer>
          </article>

          <article v-for="f in figures" :key="f.n" class="fig" :class="'f' + f.n">
            <header class="ftitle">
              <div class="wbtns">
                <button v-for="b in ['x', 'm', 'r']" :key="b" class="wbtn" :class="b" :aria-label="b">
                  <svg viewBox="0 0 17 17"><path v-if="b === 'x'" d="M5.500 5.500l6 6M11.500 5.500l-6 6" /><path v-else-if="b === 'm'" d="M4.500 8.500h8" /><rect v-else x="5" y="5.500" width="7" height="6" /></svg>
                </button>
              </div>
              <h2>Figure {{ f.n }}</h2>
            </header>
            <div class="tools">
              <i class="grip"></i>
              <template v-for="(t, i) in tools" :key="i">
                <i v-if="t === 'sep'" class="sep"></i>
                <button v-else class="tool" :aria-label="t">
                  <svg viewBox="0 0 24 24">
                    <g v-if="t === 'home'"><path d="M5 14.500L12 8.500l7 6V22h-5v-5h-4v5H5z" /><path d="M2.500 14L12 5.500l9.500 8.500" fill="none" stroke="#000" stroke-width="1.800" /><path d="M16.500 4.500h3v7l-3-3z" /></g>
                    <path v-else-if="t === 'back'" d="M12.500 4L5 12l7.500 8M5.500 12H21" fill="none" stroke="#000" stroke-width="4" />
                    <path v-else-if="t === 'forward'" d="M11.500 4L19 12l-7.500 8M18.500 12H3" fill="none" stroke="#000" stroke-width="4" />
                    <path v-else-if="t === 'pan'" d="M12 0.500l4 5h-2.700v5.200h5.200V8l5 4-5 4v-2.700h-5.200v5.200H16l-4 5-4-5h2.700v-5.200H5.500V16l-5-4 5-4v2.700h5.200V5.500H8z" />
                    <g v-else-if="t === 'zoom'" fill="none" stroke="#000"><circle cx="10.500" cy="10" r="7.500" stroke-width="3" /><path d="M16 16l6 6" stroke-width="3.800" /></g>
                    <g v-else-if="t === 'sliders'"><path d="M2 5.500h20M2 12h20M2 18.500h20" stroke="#000" stroke-width="1.500" /><path d="M6 3.500h4v4H6zM14.500 10h4v4h-4zM7 16.500h5v4H7z" /></g>
                    <g v-else-if="t === 'chart'"><path d="M.8 2v19.500H24" fill="none" stroke="#000" stroke-width="1.500" /><path d="M4 18l6-6.500 3.500 4L20 8" fill="none" stroke="#000" stroke-width="3.200" /><path d="M16 4h7.500v7.500z" /></g>
                    <g v-else><path d="M3 2.800h13.500l4.500 4.500v14H3z" fill="none" stroke="#000" stroke-width="1.700" /><path d="M5.500 3h8v7.500h-8z" /><path d="M10 4h2.300v4.500H10z" fill="#fff" /><path d="M6.500 21v-7h11v7" fill="none" stroke="#000" stroke-width="1.700" /></g>
                  </svg>
                </button>
              </template>
            </div>
            <svg class="plot" viewBox="0 0 640 481" preserveAspectRatio="xMidYMid meet">
              <g v-if="f.n === 1">
                <g transform="translate(-65 -99) scale(.459 .3333)">
                  <path :d="blueTop" fill="#1f77b4" /><path :d="orangeTop" fill="#ff7f0e" /><path :d="redTop" fill="#d62728" /><path d="M733 940V822l4-4 4 4V940z" fill="#9467bd" /><path :d="brownTop" fill="#8c564b" />
                </g>
                <g transform="translate(-65 201) scale(.3333)">
                  <path :d="brownBase" fill="#8c564b" /><path :d="bluePatches" fill="#1f77b4" /><path :d="redStripes" fill="#d62728" /><path :d="orangeStripes" fill="#ff7f0e" /><path :d="whiteGaps" fill="#fff" /><path :d="purpleStripes" fill="#9467bd" /><path :d="pinkTrace" fill="#e377c2" /><path d="M1276 597h39v34h-39z" fill="#8c564b" /><path :d="greyLines" fill="#7f7f7f" />
                </g>
              </g>
              <g v-else-if="f.n === 3" fill="#1f77b4">
                <g transform="translate(203 184) scale(.37 .3333)"><path :d="blueSteps" /><path :d="blueSpikes" /></g>
                <g transform="translate(-207 -106) scale(.3333)"><path :d="blueSpikesLeft" /></g>
              </g>
              <g v-else transform="translate(-4 -90) scale(.421 .3333)">
                <path :d="greyNoise" fill="#94747c" /><path :d="greyTrace" fill="#7f7f7f" />
                <path d="M428 530v180M502 500v350M530 530v200M911 520v330M1128 530v300M1281 745v560M764 590v140M1002 880v170" stroke="#c08a90" stroke-width="1" opacity=".6" /><path d="M250 1490h1077" stroke="#94747c" stroke-width="3" />
              </g>
              <path d="M80.500 59.500h496v369h-496z" fill="none" stroke="#000" />
              <g v-for="t in f.xt" :key="'x' + t[1]"><path :d="`M${t[0] + .5} 428v5`" stroke="#000" /><text :x="t[0]" y="449" text-anchor="middle">{{ t[1] }}</text></g>
              <g v-for="t in f.yt" :key="'y' + t[1]"><path :d="`M76 ${Math.round(t[0]) + .5}h4`" stroke="#000" /><text x="70" :y="Math.round(t[0]) + 5" text-anchor="end">{{ t[1] }}</text></g>
            </svg>
            <footer class="status"><i class="corner"></i></footer>
          </article>
        </div>

        <div v-else class="wall">
          <div v-for="(s, i) in mesh" :key="i" class="band" :style="s"></div>
          <svg class="facets" viewBox="81 42 1487 1526" preserveAspectRatio="none">
            <path d="M795 780L1215 1568H360z" fill="#301808" opacity=".06" />
            <path d="M1200 42L360 1568H81V42z" fill="#ff9070" opacity=".02" />
            <path d="M81 1305L230 1568H81z" fill="#ff9060" opacity=".04" />
            <path d="M520 1190L360 1568H720z" fill="#ffb040" opacity=".025" />
            <path d="M1390 42L1568 370V42z" fill="#100820" opacity=".08" />
          </svg>
        </div>
      </div>
    </section>
  </main>
</template>

<style>
body { margin: 0; background: #4a1526; }
</style>

<style scoped>
* { box-sizing: border-box; }
button { border: 0; padding: 0; margin: 0; background: none; font: inherit; color: inherit; display: flex; align-items: center; justify-content: center; }
h1, h2, p, ul { margin: 0; padding: 0; font-weight: bold; }
svg { display: block; }
.desk { display: flex; height: 100vh; font-family: "Noto Sans", "Open Sans", sans-serif; overflow: hidden; }
.monitor { flex: 1; min-width: 0; display: flex; flex-direction: column; }
.panel { height: 24px; flex: none; display: flex; align-items: center; gap: 13px; padding: 0 7px 0 5px; background: linear-gradient(#59584c, #3d3c38); position: relative; z-index: 2; box-shadow: 0 1px 4px rgba(0, 0, 0, .5); }
.wbtns { display: flex; gap: 2px; }
.wbtn { width: 17px; height: 17px; border-radius: 50%; background: #6a6963; border: 1px solid #3a3935; }
.wbtn svg { width: 15px; height: 15px; fill: none; stroke: #3c3b37; stroke-width: 1.4; }
.ptitle { flex: 1; font-size: 14px; line-height: 24px; color: #7e7c75; white-space: nowrap; }
.tray { display: flex; align-items: center; gap: 12px; color: #dfdbd2; }
.ic22 { width: 22px; height: 22px; }
.ic18 { width: 18px; height: 18px; }
.lang { width: 20px; height: 20px; border-radius: 2px; background: #dfdbd2; color: #45443f; font-size: 13px; line-height: 20px; text-align: center; }
.clock { font-size: 14px; line-height: 24px; }
.work { flex: 1; display: flex; min-height: 0; }

.launcher { width: 65px; flex: none; display: flex; flex-direction: column; gap: 7px; padding: 6px 7px 0 6px; background: linear-gradient(#5b1127, #5e1529 45%, #7c2231); position: relative; z-index: 1; }
.launcher.right { border-right: 1px solid #7b3b48; padding-right: 6px; }
.tile { width: 52px; height: 52px; flex: none; border-radius: 4px; position: relative; box-shadow: inset 0 0 0 1px rgba(255, 255, 255, .22), inset 0 9px 10px -5px rgba(255, 255, 255, .5); }
.app { width: 52px; height: 52px; }
.pip { position: absolute; left: -6px; top: 20px; width: 6px; height: 12px; }
.pipr { position: absolute; right: -6px; top: 20px; width: 6px; height: 12px; }
.plum { background: radial-gradient(#b8547c, #8c1f4c); }
.rose { background: #8c3a4a; }
.blue { background: #3f62b5; }
.green { background: #41a832; }
.rust { background: #a85c2e; }
.wine { background: #762a40; }
.silver { background: #b9b7b8; }
.red { background: #b50d0f; }
.mint { background: #4cb56c; }
.coral { background: #c14148; }
.tan { background: #b07e44; }
.azure { background: #0b66cc; }
.grey { background: #b0a4ab; }
.trash { height: 46px; flex: none; margin-top: -6px; }
.trash svg { width: 56px; height: 46px; flex: none; }

.session { flex: 1; min-width: 0; position: relative; display: flex; overflow: hidden; }
.browser { flex: 1; min-width: 0; min-height: 0; display: flex; flex-direction: column; background: #fff; }
.tabstrip { height: 28px; flex: none; display: flex; background: #3c3b37; padding-left: 29px; }
.tab { flex: 1; min-width: 0; position: relative; justify-content: flex-start; padding-left: 6px; gap: 3px; font: 14px "Noto Sans", sans-serif; color: #6f6e6b; }
.tabbg { position: absolute; left: -5px; top: 1px; width: 48px; height: 28px; }
.tabic { width: 16px; height: 16px; position: relative; flex: none; }
.tabtx { position: relative; width: 5px; overflow: hidden; }
.stripend { width: 70px; flex: none; display: flex; align-items: flex-start; justify-content: space-between; padding: 2px 6px 0 6px; }
.newtab { width: 28px; height: 15px; margin-top: 6px; }
.user { width: 24px; height: 17px; border: 1px solid #5a5954; border-radius: 3px; background: #2f2e2b; }
.user svg { width: 12px; height: 12px; }
.addr { height: 38px; flex: none; display: flex; align-items: center; gap: 16px; padding: 0 16px 0 200px; background: #f2f1f0; border-top: 1px solid #aaa; border-bottom: 1px solid #b4b2b0; position: relative; }
.url { flex: 1; min-width: 0; height: 28px; border: 1px solid #a8a6a4; border-radius: 3px; background: #fff; }
.fav { position: absolute; right: 42px; top: 10px; width: 16px; height: 16px; }
.dots { width: 4px; height: 16px; }
.ghead { height: 74px; flex: none; display: flex; align-items: center; background: #f1f1f1; border-bottom: 1px solid #ddd; padding: 0 37px 0 0; }
.gtop { flex: 1; align-self: flex-end; height: 55px; margin-right: 160px; background: #fff; border-top: 1px solid #ccc; }
.avatar { width: 40px; height: 40px; border-radius: 50%; background: #0097a7; color: #fff; font: 24px/42px Roboto, sans-serif; padding-left: 15px; }
.notice { position: absolute; left: 300px; top: 121px; width: 620px; height: 39px; padding-left: 334px; background: #f9edbe; border: 1px solid #e8cf6a; box-shadow: 0 2px 4px rgba(0, 0, 0, .2); font: bold 16px/38px "Liberation Sans", Arial, sans-serif; color: #222; white-space: nowrap; overflow: hidden; }
.gbar { height: 60px; flex: none; display: flex; justify-content: flex-end; align-items: flex-start; padding: 12px 37px 0 0; }
.gset { width: 60px; height: 37px; border: 1px solid #ccc; border-radius: 2px; background: #f4f4f4; }
.gbody { flex: 1; min-height: 0; display: flex; overflow: hidden; }
.side { width: 253px; flex: none; display: flex; flex-direction: column; justify-content: flex-end; padding: 0 20px 0 38px; }
.chat { height: 41px; display: flex; justify-content: center; border-top: 1px solid #ddd; }
.chat button { width: 46px; }
.chat .on { background: #f0f0f0; border: 1px solid #e4e4e4; border-top: 0; }
.chat svg { width: 20px; height: 20px; }
.mails { flex: 1; min-width: 0; list-style: none; font: 16px/40px "Liberation Sans", Arial, sans-serif; color: #222; overflow: hidden; }
.mail { height: 41px; display: grid; grid-template-columns: 16px 36px 322px 1fr 135px; align-items: center; padding-left: 13px; border-top: 1px solid #ddd; background: #f3f3f3; }
.mail.unread { background: #fff; font-weight: bold; }
.chk { appearance: none; width: 16px; height: 16px; margin: 0; border: 1px solid #bbb; background: transparent; }
.star { width: 20px; height: 20px; margin-left: 14px; }
.from { padding-left: 15px; white-space: nowrap; overflow: hidden; }
.subj { display: flex; justify-content: flex-end; overflow: hidden; color: #777; white-space: nowrap; }
.line { flex: none; white-space: pre; }
.lead { color: #222; }
.unread .subj { justify-content: flex-start; }
.date { padding-left: 53px; white-space: nowrap; }
.scroll { width: 37px; flex: none; display: flex; justify-content: flex-end; }
.thumb { width: 13px; height: 167px; background: #c8c8c8; border: 1px solid #b8b8b8; }
.shelf { height: 49px; flex: none; display: flex; align-items: center; background: #f2f1f0; border-top: 1px solid #c0bebc; padding: 0 12px 0 3px; font-size: 15px; color: #404040; }
.dl { width: 227px; height: 37px; flex: none; display: flex; align-items: center; gap: 13px; padding: 0 17px; border-right: 1px solid #c8c6c4; }
.dlic { width: 16px; height: 16px; flex: none; }
.dlname { flex: 1; color: inherit; text-decoration: none; white-space: nowrap; }
.caret { width: 12px; height: 8px; flex: none; }
.grow { flex: 1; }
.showall { width: 90px; height: 30px; border: 1px solid #a8a6a4; border-radius: 3px; background: linear-gradient(#e9e8e6, #dddbd8); font-size: 14px; font-weight: 600; color: #3c3c3c; }
.shut { margin-left: 12px; width: 12px; }
.shut svg { width: 12px; height: 12px; }

.fig { position: absolute; width: 640px; display: flex; flex-direction: column; background: #fff; border-radius: 6px 6px 0 0; box-shadow: 0 6px 18px rgba(0, 0, 0, .42); }
.f1 { left: 0; top: 0; }
.f3 { left: 832px; top: 7px; }
.f2 { left: 409px; top: 251px; box-shadow: 0 10px 26px 2px rgba(0, 0, 0, .65); }
.ftitle { height: 28px; display: flex; align-items: center; gap: 12px; padding: 0 7px; background: #3e3d39; border-radius: 6px 6px 0 0; color: #7e7c75; }
.ftitle h2 { font-size: 14px; line-height: 28px; }
.f2 .ftitle { background: linear-gradient(#59584c, #3d3c38); color: #dfdbd2; }
.f2 .wbtn { background: #7c7a72; }
.f2 .wbtn.x { background: #ee5a30; }
.tools { height: 47px; display: flex; align-items: center; background: linear-gradient(#f8f5f2, #ece8e4); border-bottom: 1px solid #b5aca6; }
.grip { width: 7px; height: 18px; background: radial-gradient(circle at 0 0, #aaa 1px, transparent 1px) 4px 0 / 3px 3px; }
.tool { width: 44px; height: 40px; }
.tool svg { width: 24px; height: 24px; }
.sep { width: 18px; height: 30px; background: linear-gradient(#ccc6c0, #ccc6c0) center / 1px 100% no-repeat; }
.plot { width: 100%; height: auto; font: 14px "DejaVu Sans", sans-serif; fill: #000; }
.status { height: 22px; background: #edeae6; display: flex; justify-content: flex-end; align-items: flex-end; }
.corner { width: 9px; height: 11px; background: radial-gradient(circle at 0 0, #8a8680 1px, transparent 1px) 0 0 / 3px 3px; }
.f1 .corner { visibility: hidden; }

.wall { flex: 1; position: relative; overflow: hidden; }
.band, .facets { position: absolute; inset: 0; width: 100%; height: 100%; }
</style>
